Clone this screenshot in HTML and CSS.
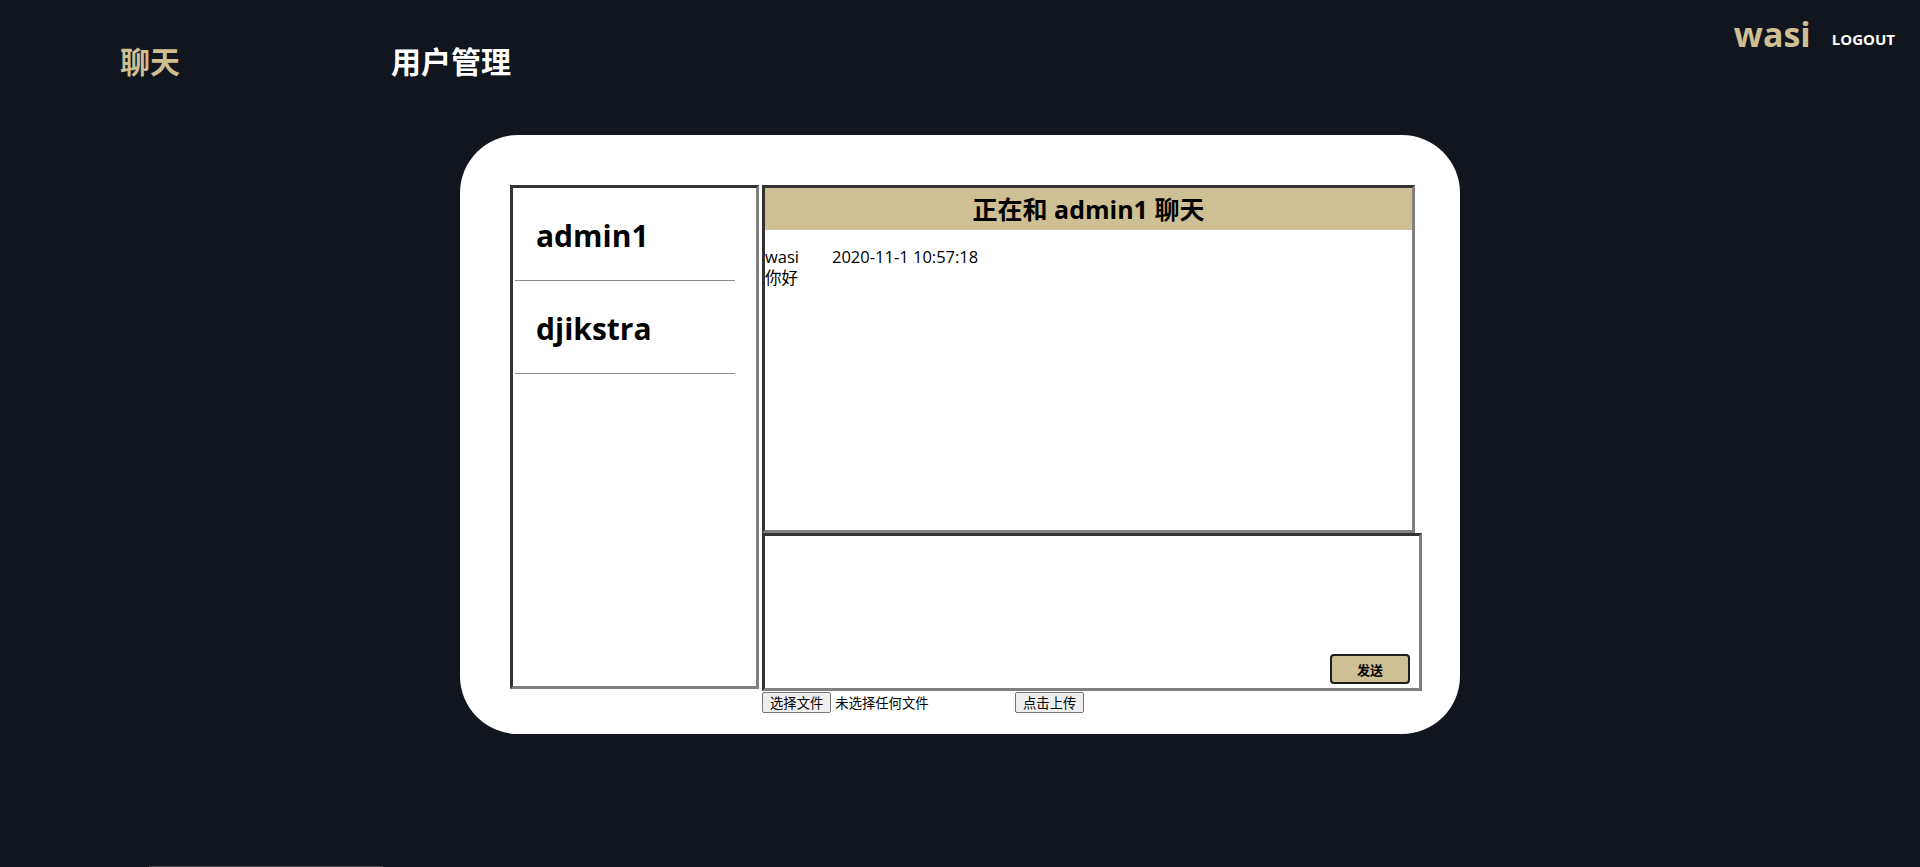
FILE: index.html
```html
<!DOCTYPE html>
<html lang="zh-CN">
<head>
<meta charset="utf-8">
<title>聊天</title>
<link rel="stylesheet" href="styles.css">
</head>
<body>
<header class="topbar">
  <nav class="nav">
    <a class="nav-item nav-active">聊天</a>
    <a class="nav-item">用户管理</a>
  </nav>
  <div class="account">
    <span class="account-name">wasi</span>
    <a class="logout">LOGOUT</a>
  </div>
</header>

<main class="card">
  <ul class="user-list">
    <li class="user-item">admin1</li>
    <li class="user-item">djikstra</li>
  </ul>
  <section class="chat">
    <div class="messages">
      <h2 class="chat-title">正在和 admin1 聊天</h2>
      <div class="message">
        <div class="message-meta"><span class="message-user">wasi</span><span class="message-time">2020-11-1 10:57:18</span></div>
        <div class="message-text">你好</div>
      </div>
    </div>
    <div class="composer">
      <div class="composer-area"></div>
      <button class="send-btn">发送</button>
    </div>
    <div class="file-row">
      <div class="file-pick">
        <button class="sys-btn">选择文件</button>
        <span class="file-status">未选择任何文件</span>
      </div>
      <button class="sys-btn">点击上传</button>
    </div>
  </section>
</main>

<div class="scroll-thumb"></div>
</body>
</html>
```

FILE: styles.css
```css
html, body {
  margin: 0;
  padding: 0;
}

body {
  background: #11151d;
  height: 867px;
  overflow: hidden;
  position: relative;
  font-family: "Open Sans", "Noto Sans CJK SC", sans-serif;
  color: #000;
}

.topbar {
  display: flex;
  justify-content: space-between;
  align-items: flex-start;
  height: 135px;
  box-sizing: border-box;
}

.nav {
  display: flex;
  padding: 40px 0 0 120px;
  gap: 211px;
}

.nav-item {
  font-family: "Noto Sans CJK SC", sans-serif;
  font-size: 30px;
  font-weight: 700;
  line-height: 40px;
  color: #fff;
}

.nav-active {
  color: #cfbf93;
}

.account {
  display: flex;
  align-items: flex-start;
  gap: 21px;
  padding: 0 25px 0 0;
}

.account-name {
  font-size: 34px;
  font-weight: 700;
  color: #cfbf93;
  line-height: 44px;
  padding-top: 12px;
}

.logout {
  font-size: 15px;
  font-weight: 700;
  color: #fff;
  line-height: 20px;
  padding-top: 29px;
}

.card {
  width: 1000px;
  height: 599px;
  margin: 0 auto;
  box-sizing: border-box;
  background: #fff;
  border-radius: 58px;
  padding: 50px 0 0 50px;
  display: flex;
  align-items: flex-start;
  gap: 3px;
}

.user-list {
  list-style: none;
  margin: 0;
  padding: 0;
  width: 249px;
  height: 504px;
  box-sizing: border-box;
  border: 3px solid;
  border-color: #333 #808080 #808080 #333;
}

.user-item {
  width: 220px;
  height: 93px;
  margin-left: 2px;
  box-sizing: border-box;
  border-bottom: 1px solid #888;
  padding: 28px 0 0 21px;
  font-size: 30px;
  font-weight: 700;
  line-height: 40px;
}

.chat {
  display: flex;
  flex-direction: column;
}

.messages {
  width: 653px;
  height: 348px;
  box-sizing: border-box;
  border: 3px solid;
  border-color: #333 #808080 #808080 #333;
}

.chat-title {
  margin: 0;
  height: 42px;
  background: #cfbf94;
  text-align: center;
  font-size: 25px;
  font-weight: 700;
  line-height: 42px;
}

.message {
  margin-top: 16px;
  font-size: 16.5px;
  line-height: 21px;
}

.message-user {
  display: inline-block;
  width: 67px;
}

.composer {
  position: relative;
  width: 660px;
  height: 158px;
}

.composer-area {
  width: 100%;
  height: 100%;
  box-sizing: border-box;
  border: 3px solid;
  border-color: #333 #808080 #808080 #333;
  background: #fff;
}

.send-btn {
  position: absolute;
  right: 12px;
  bottom: 7px;
  width: 80px;
  height: 30px;
  box-sizing: border-box;
  background: #cfbf94;
  border: 2px solid #1e1e1e;
  border-radius: 4px;
  font-family: "Noto Sans CJK SC", sans-serif;
  font-size: 13px;
  font-weight: 700;
  color: #000;
  padding: 0;
}

.file-row {
  display: flex;
  align-items: center;
  margin-top: 1px;
}

.file-pick {
  display: flex;
  align-items: center;
  width: 253px;
}

.sys-btn {
  height: 21px;
  box-sizing: border-box;
  padding: 0 7px;
  background: #efefef;
  border: 1px solid #767676;
  border-radius: 2px;
  font-family: "Noto Sans CJK SC", sans-serif;
  font-size: 13.33px;
  line-height: 18px;
  color: #000;
}

.file-status {
  margin-left: 4px;
  font-family: "Noto Sans CJK SC", sans-serif;
  font-size: 13.33px;
  color: #000;
}

.scroll-thumb {
  position: absolute;
  left: 149px;
  bottom: 0;
  width: 234px;
  height: 1px;
  background: #4b4e54;
}
```
